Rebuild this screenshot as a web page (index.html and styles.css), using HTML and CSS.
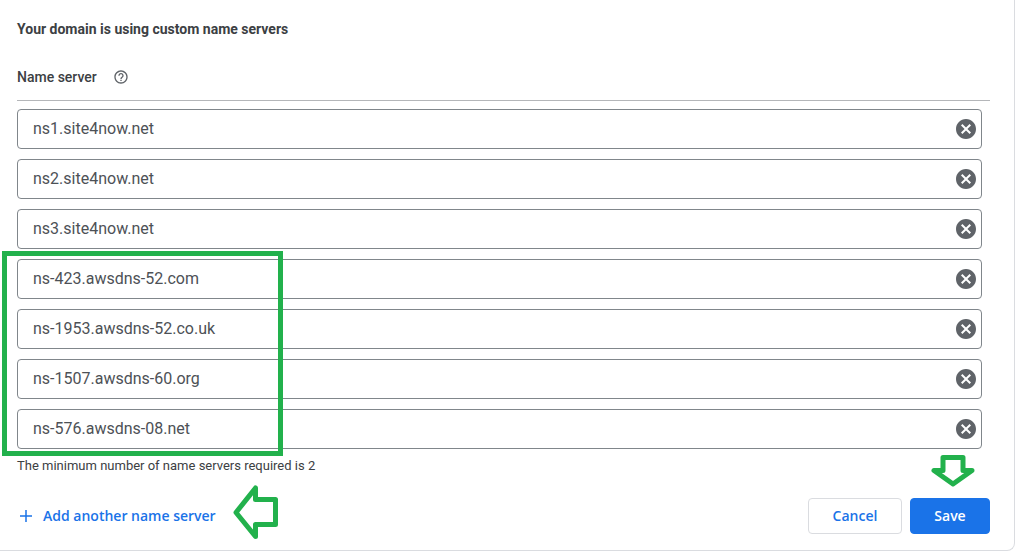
FILE: index.html
```html
<!DOCTYPE html>
<html lang="en">
<head>
<meta charset="utf-8">
<title>Custom name servers</title>
<link rel="stylesheet" href="styles.css">
</head>
<body>
<svg class="defs" aria-hidden="true">
  <symbol id="clear" viewBox="0 0 24 24"><path d="M12 2C6.47 2 2 6.47 2 12s4.47 10 10 10 10-4.47 10-10S17.53 2 12 2zm5 13.59L15.59 17 12 13.41 8.41 17 7 15.59 10.59 12 7 8.41 8.41 7 12 10.59 15.59 7 17 8.41 13.41 12 17 15.59z"/></symbol>
</svg>
<main class="card">
  <h1 class="title">Your domain is using custom name servers</h1>
  <div class="heading">
    <h2 class="heading-text">Name server</h2>
    <button class="help" type="button" aria-label="Help">
      <svg class="help-icon" viewBox="0 0 24 24"><path d="M11 18h2v-2h-2v2zm1-16C6.48 2 2 6.48 2 12s4.48 10 10 10 10-4.48 10-10S17.52 2 12 2zm0 18c-4.41 0-8-3.59-8-8s3.59-8 8-8 8 3.590 8 8-3.590 8-8 8zm0-14c-2.210 0-4 1.790-4 4h2c0-1.100.9-2 2-2s2 .9 2 2c0 2-3 1.750-3 5h2c0-2.250 3-2.500 3-5 0-2.210-1.790-4-4-4z"/></svg>
    </button>
  </div>
  <form class="form">
    <div class="fields">
      <div class="field"><input class="input" aria-label="Name server 1" value="ns1.site4now.net"><button class="clear" type="button" aria-label="Remove name server 1"><svg class="clear-icon"><use href="#clear"/></svg></button></div>
      <div class="field"><input class="input" aria-label="Name server 2" value="ns2.site4now.net"><button class="clear" type="button" aria-label="Remove name server 2"><svg class="clear-icon"><use href="#clear"/></svg></button></div>
      <div class="field"><input class="input" aria-label="Name server 3" value="ns3.site4now.net"><button class="clear" type="button" aria-label="Remove name server 3"><svg class="clear-icon"><use href="#clear"/></svg></button></div>
    </div>
    <div class="fields marked">
      <div class="field"><input class="input" aria-label="Name server 4" value="ns-423.awsdns-52.com"><button class="clear" type="button" aria-label="Remove name server 4"><svg class="clear-icon"><use href="#clear"/></svg></button></div>
      <div class="field"><input class="input" aria-label="Name server 5" value="ns-1953.awsdns-52.co.uk"><button class="clear" type="button" aria-label="Remove name server 5"><svg class="clear-icon"><use href="#clear"/></svg></button></div>
      <div class="field"><input class="input" aria-label="Name server 6" value="ns-1507.awsdns-60.org"><button class="clear" type="button" aria-label="Remove name server 6"><svg class="clear-icon"><use href="#clear"/></svg></button></div>
      <div class="field"><input class="input" aria-label="Name server 7" value="ns-576.awsdns-08.net"><button class="clear" type="button" aria-label="Remove name server 7"><svg class="clear-icon"><use href="#clear"/></svg></button></div>
      <span class="outline"></span>
    </div>
    <p class="hint">The minimum number of name servers required is 2</p>
    <div class="actions">
      <div class="add-group">
        <button class="add" type="button"><svg class="plus" viewBox="0 0 12 12"><path d="M6 0v12M0 6h12"/></svg>Add another name server</button>
        <svg class="arrow-left" viewBox="0 0 46 56" aria-hidden="true"><path d="M4 28.500 23.500 4v11.500h20v25h-20v12z"/></svg>
      </div>
      <button class="button" type="button">Cancel</button>
      <div class="save-group">
        <button class="button primary" type="submit">Save</button>
        <svg class="arrow-down" viewBox="0 0 46 34" aria-hidden="true"><path d="M13 3.500h20v13h9L23 30 4 16.500h9z"/></svg>
      </div>
    </div>
  </form>
</main>
</body>
</html>
```
FILE: styles.css
```css
* { box-sizing: border-box; }
body {
  margin: 0;
  background: #fff;
  color: #3c4043;
  font-family: Roboto, "Liberation Sans", sans-serif;
}
button { font: inherit; cursor: pointer; }
.defs { position: absolute; width: 0; height: 0; }
.card {
  margin-right: 12px;
  padding: 19px 24px 16px 17px;
  border: solid #dadce0;
  border-width: 0 1px 1px 0;
  border-radius: 0 0 8px 0;
}
.title, .heading-text {
  margin: 0;
  font-size: 14px;
  line-height: 20px;
}
.title { font-weight: 700; }
.heading-text { font-weight: 500; }
.heading {
  display: flex;
  align-items: center;
  gap: 16px;
  margin-top: 28px;
  padding-bottom: 13px;
  border-bottom: 1px solid #b4b6b9;
}
.help, .clear {
  display: flex;
  padding: 0;
  border: 0;
  background: none;
}
.help-icon { width: 16px; height: 16px; fill: #5f6368; }
.form { margin-top: 8px; }
.fields {
  display: grid;
  gap: 10px;
  margin-right: 8px;
}
.marked { position: relative; margin-top: 10px; }
.outline {
  position: absolute;
  top: -8px;
  bottom: -7px;
  left: -15px;
  width: 281px;
  border: 5px solid #22b14c;
  pointer-events: none;
}
.field {
  display: flex;
  align-items: center;
  height: 40px;
  padding: 0 3px 0 15px;
  border: 1px solid #80868b;
  border-radius: 4px;
}
.input {
  flex: 1;
  min-width: 0;
  padding: 0;
  border: 0;
  outline: 0;
  background: none;
  color: #4d5156;
  font: 16px/24px Roboto, "Liberation Sans", sans-serif;
}
.clear-icon { width: 24px; height: 24px; fill: #5f6368; }
.hint {
  margin: 9px 0 0;
  font-size: 13px;
  line-height: 16px;
}
.actions {
  display: flex;
  align-items: center;
  gap: 8px;
  margin-top: 24px;
}
.add-group, .save-group { position: relative; }
.add-group { margin-right: auto; }
.add {
  display: flex;
  align-items: center;
  gap: 11px;
  padding: 0 3px;
  border: 0;
  background: none;
  color: #1a73e8;
  font: 600 14px/20px "Open Sans", Lato, sans-serif;
}
.plus { width: 12px; height: 12px; fill: none; stroke: #1a73e8; stroke-width: 1.5; }
.button {
  min-width: 94px;
  height: 36px;
  padding: 0 16px;
  border: 1px solid #dadce0;
  border-radius: 4px;
  background: #fff;
  color: #1a73e8;
  font: 600 14px/20px "Open Sans", Lato, sans-serif;
}
.primary {
  min-width: 80px;
  border-color: #1a73e8;
  background: #1a73e8;
  color: #fff;
}
.arrow-left, .arrow-down {
  position: absolute;
  fill: none;
  stroke: #22b14c;
  stroke-width: 5;
  stroke-linejoin: round;
}
.arrow-left { top: -22px; left: 215px; width: 46px; height: 56px; }
.arrow-down { top: -44px; left: 20px; width: 46px; height: 34px; }
```
